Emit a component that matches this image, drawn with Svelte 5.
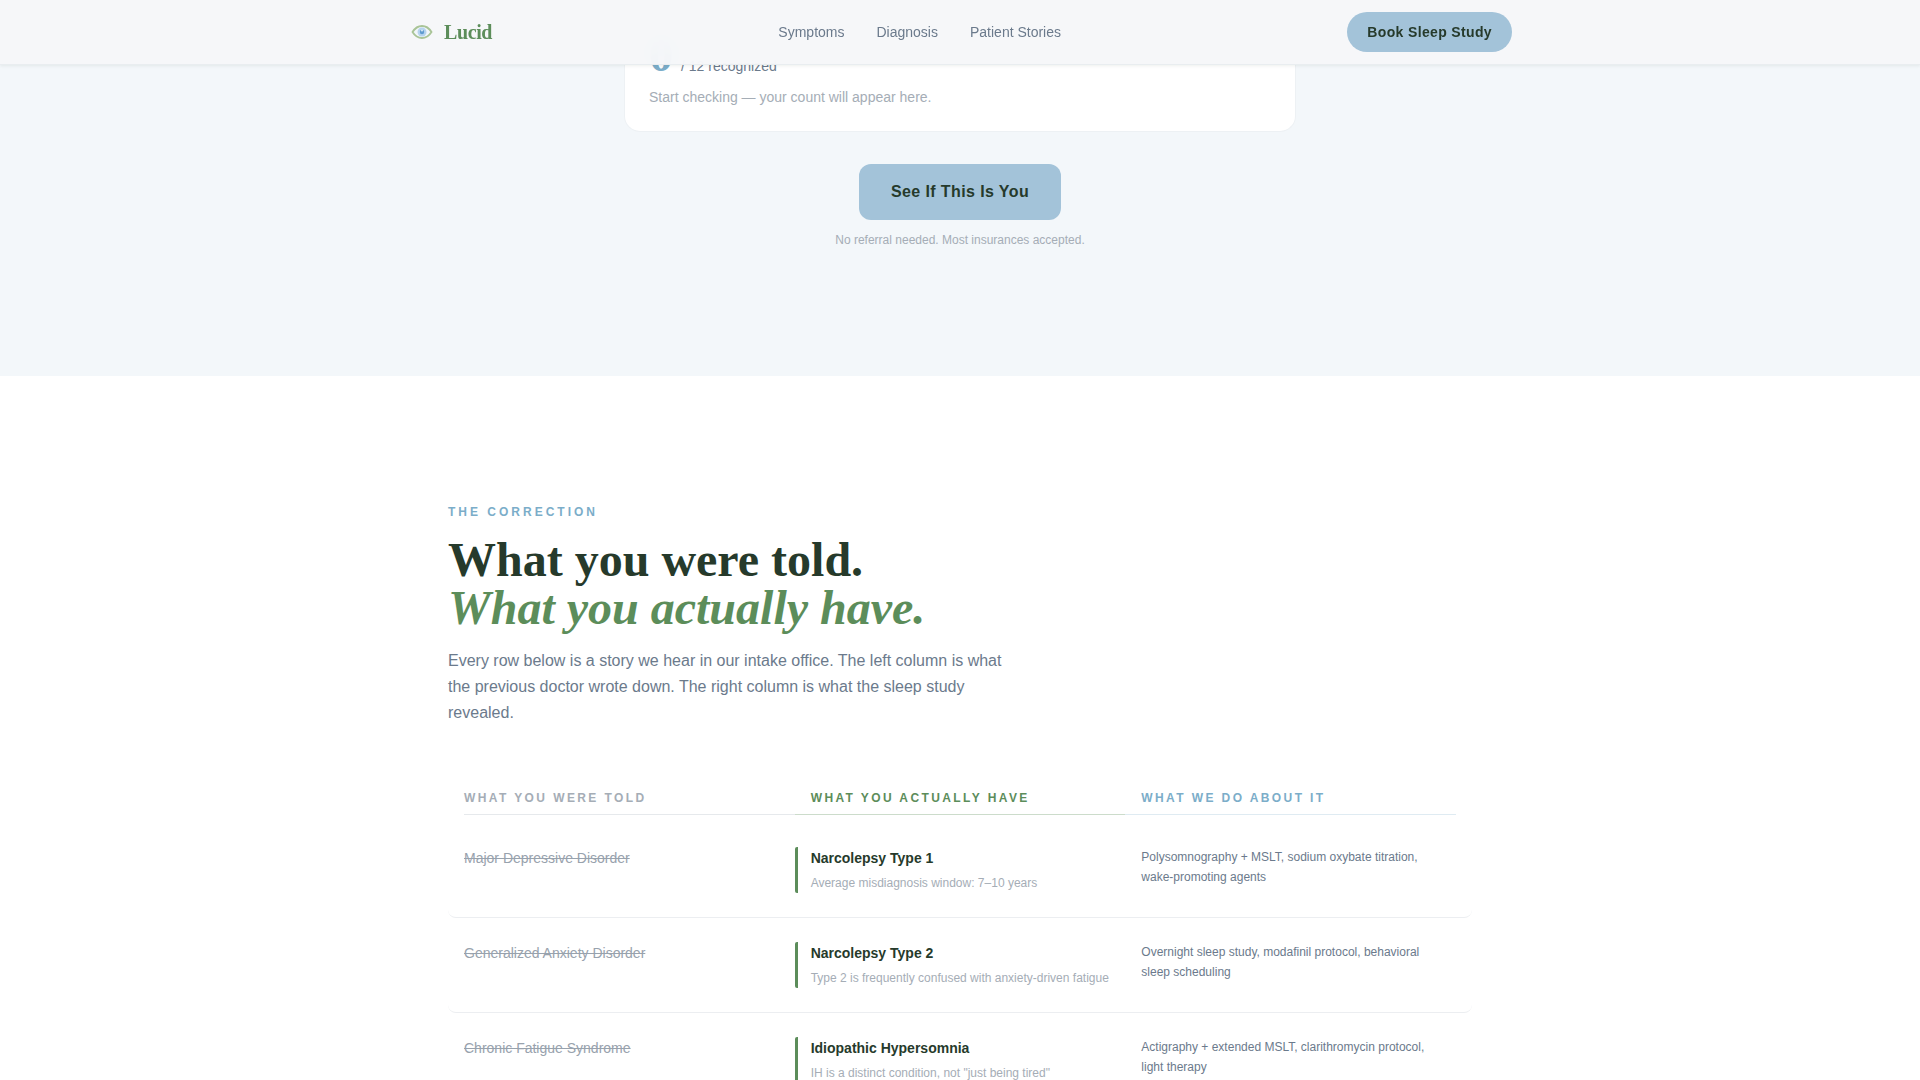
<script>
  const links = [
    { label: 'Symptoms', href: '#symptoms' },
    { label: 'Diagnosis', href: '#diagnosis' },
    { label: 'Patient Stories', href: '#stories' }
  ];

  const rows = [
    {
      told: 'Major Depressive Disorder',
      actual: 'Narcolepsy Type 1',
      note: 'Average misdiagnosis window: 7–10 years',
      plan: 'Polysomnography + MSLT, sodium oxybate titration, wake-promoting agents'
    },
    {
      told: 'Generalized Anxiety Disorder',
      actual: 'Narcolepsy Type 2',
      note: 'Type 2 is frequently confused with anxiety-driven fatigue',
      plan: 'Overnight sleep study, modafinil protocol, behavioral sleep scheduling'
    },
    {
      told: 'Chronic Fatigue Syndrome',
      actual: 'Idiopathic Hypersomnia',
      note: 'IH is a distinct condition, not "just being tired"',
      plan: 'Actigraphy + extended MSLT, clarithromycin protocol, light therapy'
    }
  ];

  let recognized = $state(0);
</script>

<header class="site-header">
  <div class="bar">
    <a class="brand" href="#top">
      <svg width="28" height="28" viewBox="0 0 28 28" fill="none" aria-hidden="true">
        <path d="M4.500 14C7 10 10.200 8 14 8s7 2 9.500 6c-2.500 4-5.700 6-9.500 6s-7-2-9.500-6Z" fill="#f1f6fa" stroke="#a9c497" stroke-width="1.800" />
        <circle cx="14" cy="14" r="4.500" fill="#b5d3ee" />
        <circle cx="14" cy="14" r="2.200" fill="#5f9bd0" />
        <circle cx="14" cy="12.500" r=".9" fill="#e8f3fb" />
      </svg>
      <span>Lucid</span>
    </a>
    <nav aria-label="Main">
      {#each links as link}
        <a href={link.href}>{link.label}</a>
      {/each}
    </nav>
    <button class="book" type="button">Book Sleep Study</button>
  </div>
</header>

<main>
  <section class="symptoms" id="symptoms">
    <div class="counter">
      <p class="count"><strong>{recognized}</strong><span>/ 12 recognized</span></p>
      <p class="hint">Start checking — your count will appear here.</p>
    </div>
    <button class="cta" type="button">See If This Is You</button>
    <p class="fine">No referral needed. Most insurances accepted.</p>
  </section>

  <section class="correction" id="diagnosis">
    <p class="eyebrow">The Correction</p>
    <h2>What you were told.<br /><em>What you actually have.</em></h2>
    <p class="intro">
      Every row below is a story we hear in our intake office. The left column is what the previous
      doctor wrote down. The right column is what the sleep study revealed.
    </p>

    <table>
      <thead>
        <tr>
          <th scope="col">What you were told</th>
          <th scope="col" class="have">What you actually have</th>
          <th scope="col" class="do">What we do about it</th>
        </tr>
      </thead>
      <tbody>
        {#each rows as row}
          <tr>
            <td class="told"><s>{row.told}</s></td>
            <td class="actual">
              <strong>{row.actual}</strong>
              <span>{row.note}</span>
            </td>
            <td class="plan">{row.plan}</td>
          </tr>
        {/each}
      </tbody>
    </table>
  </section>
</main>

<style>
  :global(body) {
    background: #fff;
    font-family: 'Liberation Sans', Arial, sans-serif;
    color: #263a2b;
  }

  p,
  h2 {
    margin: 0;
  }

  button {
    border: 0;
    background: #a3c3d9;
    color: #263a2b;
    font-family: inherit;
    font-weight: 700;
    letter-spacing: 0.025em;
    cursor: pointer;
  }

  .site-header {
    position: fixed;
    inset: 0 0 auto;
    z-index: 10;
    background: rgb(245 247 249 / 0.95);
    backdrop-filter: blur(12px);
    border-bottom: 1px solid #e9edf0;
    box-shadow: 0 1px 3px rgb(38 58 43 / 0.08);
  }

  .bar {
    box-sizing: border-box;
    max-width: 1152px;
    height: 64px;
    margin: 0 auto;
    padding: 0 24px;
    display: flex;
    align-items: center;
    justify-content: space-between;
  }

  .brand {
    display: flex;
    align-items: center;
    gap: 8px;
    color: #5c8d5a;
    font: 700 20px/28px 'Liberation Serif', 'Times New Roman', serif;
    letter-spacing: -0.02em;
    text-decoration: none;
  }

  nav {
    display: flex;
    gap: 32px;
  }

  nav a {
    color: #6b7a8c;
    font-size: 14px;
    line-height: 20px;
    text-decoration: none;
  }

  .book {
    height: 40px;
    padding: 0 20px;
    border-radius: 20px;
    font-size: 14px;
  }

  .symptoms {
    display: flex;
    flex-direction: column;
    align-items: center;
    padding: 0 24px 128px;
    background: #f3f7fa;
  }

  .counter {
    box-sizing: border-box;
    width: 100%;
    max-width: 672px;
    padding: 31px 24px 24px;
    margin-bottom: 32px;
    background: #fff;
    border: 1px solid #edf1f4;
    border-top: 0;
    border-radius: 0 0 16px 16px;
  }

  .count {
    display: flex;
    align-items: baseline;
    gap: 8px;
    margin-bottom: 8px;
    color: #6b7a8c;
    font-size: 14px;
    line-height: 20px;
  }

  .count strong {
    color: #7badc9;
    font: 700 48px/48px 'Liberation Serif', 'Times New Roman', serif;
  }

  .hint {
    color: #a5adb6;
    font-size: 14px;
    line-height: 20px;
  }

  .cta {
    height: 56px;
    padding: 0 32px;
    margin-bottom: 12px;
    border-radius: 12px;
    font-size: 16px;
  }

  .fine {
    color: #a5adb6;
    font-size: 12px;
    line-height: 16px;
  }

  .correction {
    max-width: 1024px;
    margin: 0 auto;
    padding: 128px 24px;
  }

  .eyebrow {
    margin-bottom: 16px;
    color: #7badc9;
    font-size: 12px;
    font-weight: 700;
    line-height: 16px;
    letter-spacing: 0.25em;
    text-transform: uppercase;
  }

  h2 {
    margin-bottom: 16px;
    font: 700 48px/48px 'Liberation Serif', 'Times New Roman', serif;
  }

  h2 em {
    color: #5c8d5a;
  }

  .intro {
    max-width: 576px;
    margin-bottom: 64px;
    color: #6b7a8c;
    font-size: 16px;
    line-height: 26px;
  }

  table,
  thead,
  tbody {
    display: block;
  }

  tr {
    display: grid;
    grid-template-columns: repeat(3, 1fr);
    padding: 0 16px;
  }

  thead {
    margin-bottom: 8px;
  }

  th {
    padding: 0 16px 8px;
    border-bottom: 1px solid #e6e9ec;
    color: #a5adb6;
    font-size: 12px;
    line-height: 16px;
    letter-spacing: 0.2em;
    text-align: left;
    text-transform: uppercase;
  }

  th.have {
    color: #5c8d5a;
    border-color: #ccdccb;
  }

  th.do {
    color: #7badc9;
    border-color: #dfebf2;
  }

  tbody tr {
    padding: 24px 16px;
    border-bottom: 1px solid #eceef1;
    border-radius: 8px;
  }

  td {
    padding: 0 16px;
  }

  th:first-child,
  td:first-child {
    padding-left: 0;
  }

  .told {
    color: #98a2ad;
    font-size: 14px;
    line-height: 22px;
  }

  .actual {
    padding-left: 13px;
    border-left: 3px solid #5c8d5a;
    border-radius: 2px;
  }

  .actual strong,
  .actual span {
    display: block;
  }

  .actual strong {
    margin-bottom: 4px;
    font-size: 14px;
    line-height: 22px;
  }

  .actual span {
    color: #a5adb6;
    font-size: 12px;
    line-height: 20px;
  }

  .plan {
    color: #6b7a8c;
    font-size: 12px;
    line-height: 20px;
  }
</style>
